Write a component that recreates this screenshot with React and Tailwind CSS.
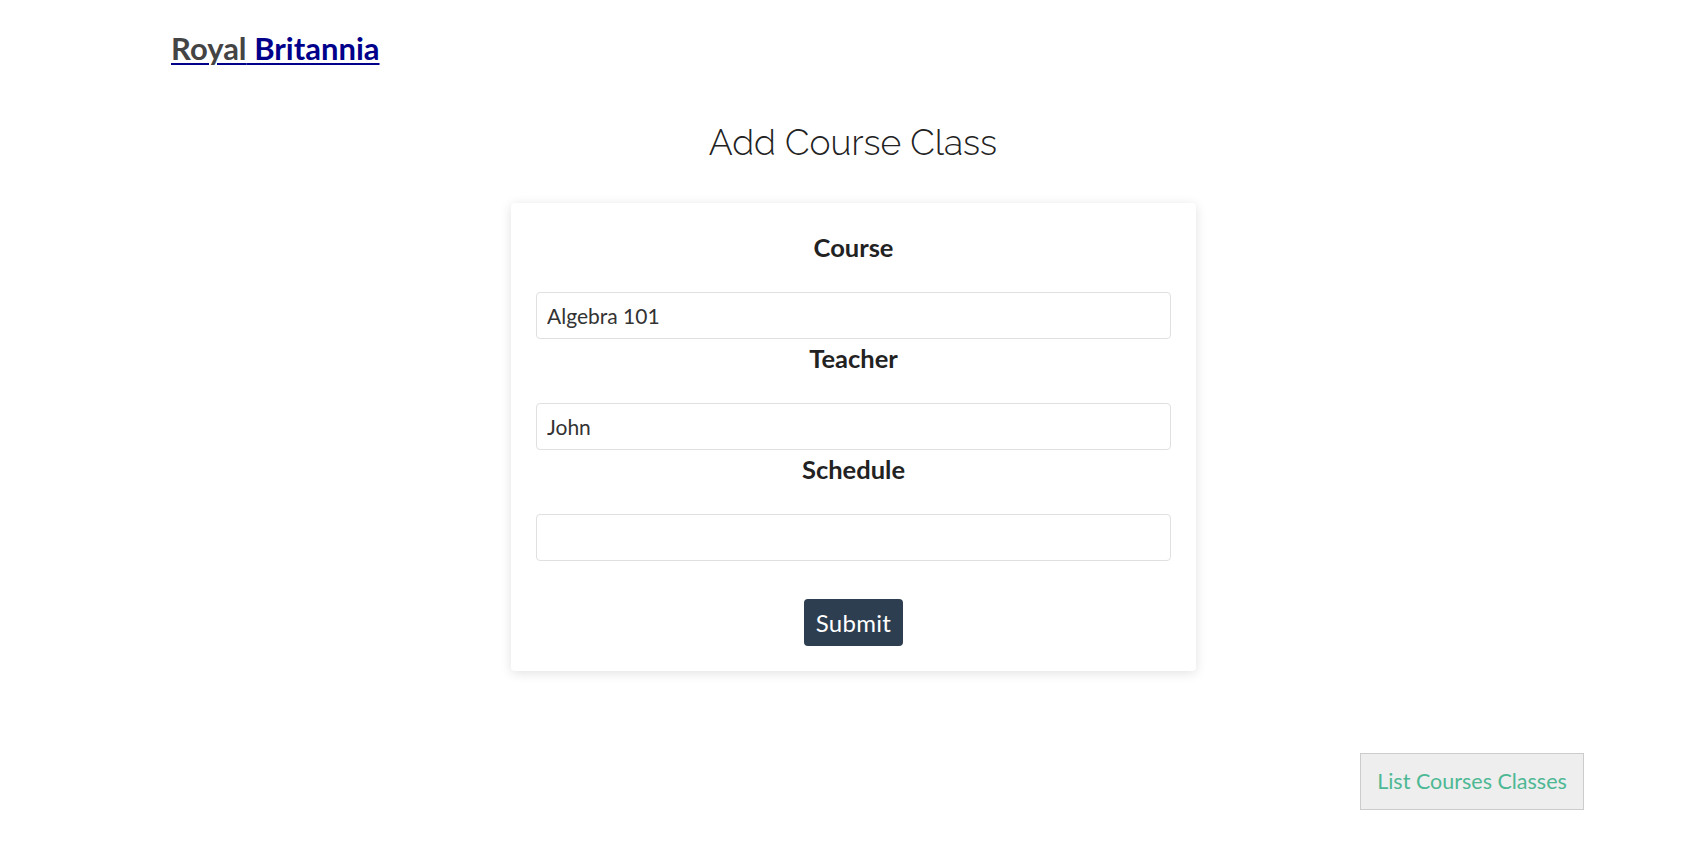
export default function App() {
  return (
    <div className="min-h-[868px] bg-white font-['Lato','Noto_Sans',sans-serif] text-[#222]">
      <header className="pl-[171px] pt-[29px]">
        <a href="#" className="text-[31px] font-bold leading-[38px] text-[#00008b] underline underline-offset-[3px] decoration-[2px]">
          <span className="text-[#444]">Royal</span> Britannia
        </a>
      </header>

      <h1 className="mt-[54px] pl-[6px] text-center text-[35.5px] font-light leading-[44px] text-[#222] font-['Raleway','Lato',sans-serif]">
        Add Course Class
      </h1>

      <div className="mt-[38px] flex justify-center pl-[7px]">
        <form className="w-[685px] rounded-[4px] bg-white px-[25px] pt-[31px] pb-[25px] shadow-[0_2px_12px_rgba(0,0,0,0.12)]">
          <Field label="Course" value="Algebra 101" />
          <Field label="Teacher" value="John" />
          <Field label="Schedule" value="" />
          <div className="mt-[38px] flex justify-center">
            <button type="button" className="h-[47px] w-[99px] rounded-[4px] bg-[#2c3e50] text-[24px] tracking-[0.3px] text-white">
              Submit
            </button>
          </div>
        </form>
      </div>

      <div className="mt-[82px] flex justify-end pr-[116px]">
        <button type="button" className="h-[57px] w-[224px] border border-[#ccc] bg-[#eee] text-[21.5px] text-[#4db894]">
          List Courses Classes
        </button>
      </div>
    </div>
  );
}

function Field({ label, value }) {
  return (
    <div className="mb-[6px]">
      <label className="block text-center text-[25.5px] font-bold leading-[26px] text-[#222]">{label}</label>
      <input
        readOnly
        value={value}
        className="mt-[32px] block h-[47px] w-full rounded-[4px] border border-[#e0e0e0] px-[10px] text-[21px] text-[#333] outline-none"
      />
    </div>
  );
}
